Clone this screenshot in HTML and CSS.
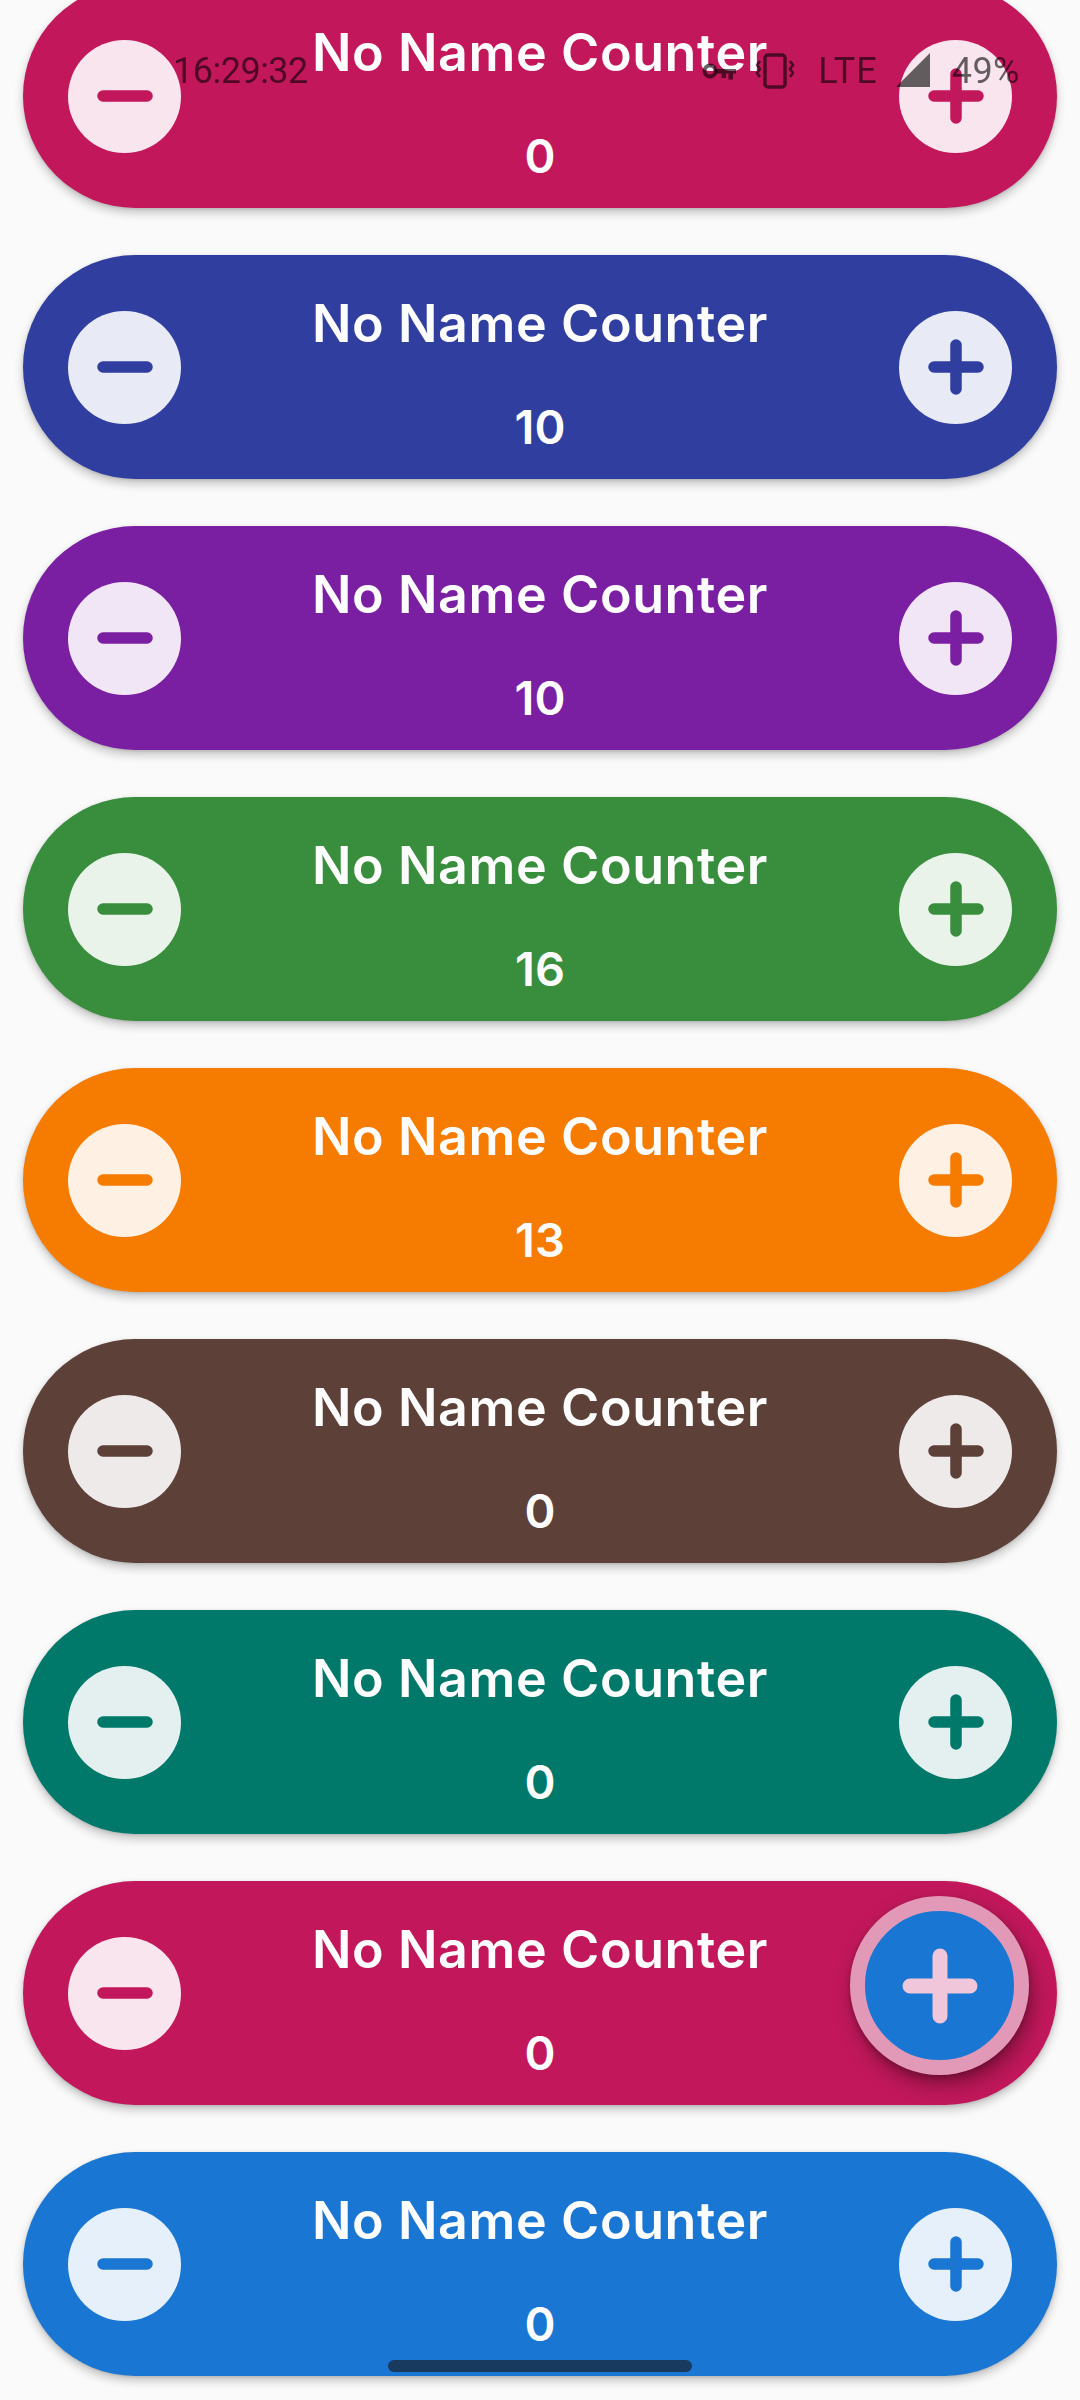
FILE: index.html
```html
<!DOCTYPE html>
<html lang="en">
<head>
<meta charset="utf-8">
<title>Counters</title>
<link rel="stylesheet" href="styles.css">
</head>
<body>
<div class="status-bar">
  <span class="time">16:29:32</span>
  <div class="status-right">
    <svg class="ic-key" width="36" height="22" viewBox="0 0 36 22"><circle cx="8" cy="9" r="5.5" fill="none" stroke="currentColor" stroke-width="4"/><path d="M13 7h21v4.5h-3v6h-4.5v-6h-2.5v4.5h-4.5v-4.5H13z" fill="currentColor"/></svg>
    <svg class="ic-vib" width="42" height="36" viewBox="0 0 42 36"><rect x="11" y="2" width="20" height="32" rx="3" fill="none" stroke="currentColor" stroke-width="3.5"/><path d="M6 8l-3 4 3 4-3 4 3 4M36 8l3 4-3 4 3 4-3 4" fill="none" stroke="currentColor" stroke-width="2.6" stroke-linejoin="round"/></svg>
    <span class="lte">LTE</span>
    <svg class="ic-sig" width="34" height="34" viewBox="0 0 34 34"><path d="M34 0V34H0z" fill="currentColor"/></svg>
    <span class="batt">49%</span>
  </div>
</div>

<main class="list">
  <section class="card pink">
    <button class="btn"><svg viewBox="0 0 56 56"><path d="M6 28H50"/></svg></button>
    <div class="info"><div class="title">No Name Counter</div><div class="count">0</div></div>
    <button class="btn"><svg viewBox="0 0 56 56"><path d="M6 28H50M28 6V50"/></svg></button>
  </section>
  <section class="card indigo">
    <button class="btn"><svg viewBox="0 0 56 56"><path d="M6 28H50"/></svg></button>
    <div class="info"><div class="title">No Name Counter</div><div class="count">10</div></div>
    <button class="btn"><svg viewBox="0 0 56 56"><path d="M6 28H50M28 6V50"/></svg></button>
  </section>
  <section class="card purple">
    <button class="btn"><svg viewBox="0 0 56 56"><path d="M6 28H50"/></svg></button>
    <div class="info"><div class="title">No Name Counter</div><div class="count">10</div></div>
    <button class="btn"><svg viewBox="0 0 56 56"><path d="M6 28H50M28 6V50"/></svg></button>
  </section>
  <section class="card green">
    <button class="btn"><svg viewBox="0 0 56 56"><path d="M6 28H50"/></svg></button>
    <div class="info"><div class="title">No Name Counter</div><div class="count">16</div></div>
    <button class="btn"><svg viewBox="0 0 56 56"><path d="M6 28H50M28 6V50"/></svg></button>
  </section>
  <section class="card orange">
    <button class="btn"><svg viewBox="0 0 56 56"><path d="M6 28H50"/></svg></button>
    <div class="info"><div class="title">No Name Counter</div><div class="count">13</div></div>
    <button class="btn"><svg viewBox="0 0 56 56"><path d="M6 28H50M28 6V50"/></svg></button>
  </section>
  <section class="card brown">
    <button class="btn"><svg viewBox="0 0 56 56"><path d="M6 28H50"/></svg></button>
    <div class="info"><div class="title">No Name Counter</div><div class="count">0</div></div>
    <button class="btn"><svg viewBox="0 0 56 56"><path d="M6 28H50M28 6V50"/></svg></button>
  </section>
  <section class="card teal">
    <button class="btn"><svg viewBox="0 0 56 56"><path d="M6 28H50"/></svg></button>
    <div class="info"><div class="title">No Name Counter</div><div class="count">0</div></div>
    <button class="btn"><svg viewBox="0 0 56 56"><path d="M6 28H50M28 6V50"/></svg></button>
  </section>
  <section class="card pink">
    <button class="btn"><svg viewBox="0 0 56 56"><path d="M6 28H50"/></svg></button>
    <div class="info"><div class="title">No Name Counter</div><div class="count">0</div></div>
    <button class="btn"><svg viewBox="0 0 56 56"><path d="M6 28H50M28 6V50"/></svg></button>
  </section>
  <section class="card blue">
    <button class="btn"><svg viewBox="0 0 56 56"><path d="M6 28H50"/></svg></button>
    <div class="info"><div class="title">No Name Counter</div><div class="count">0</div></div>
    <button class="btn"><svg viewBox="0 0 56 56"><path d="M6 28H50M28 6V50"/></svg></button>
  </section>
</main>

<button class="fab"><svg viewBox="0 0 76 76"><path d="M8 38H68M38 8V68"/></svg></button>
<div class="nav-handle"></div>
</body>
</html>
```

FILE: styles.css
```css
* { box-sizing: border-box; }
html, body { margin: 0; padding: 0; }
body {
  width: 1080px;
  height: 2400px;
  overflow: hidden;
  background: #fafafa;
  font-family: Inter, "Noto Sans", sans-serif;
}

.list {
  display: flex;
  flex-direction: column;
  gap: 47px;
  margin-top: -16px;
  padding: 0 23px;
}

.card {
  height: 224px;
  border-radius: 112px;
  display: flex;
  align-items: center;
  padding: 0 45px;
  box-shadow: 0 5px 10px rgba(0,0,0,0.22), 0 1px 3px rgba(0,0,0,0.12);
  color: var(--c);
}
.pink { --c: #c2185b; background: #c2185b; }
.indigo { --c: #303f9f; background: #303f9f; }
.purple { --c: #7b1fa2; background: #7b1fa2; }
.green { --c: #388e3c; background: #388e3c; }
.orange { --c: #f57c00; background: #f57c00; }
.brown { --c: #5d4037; background: #5d4037; }
.teal { --c: #00796b; background: #00796b; }
.blue { --c: #1976d2; background: #1976d2; }

.btn {
  width: 113px;
  height: 113px;
  flex: none;
  border: none;
  padding: 0;
  border-radius: 50%;
  background: rgba(255,255,255,0.89);
  display: flex;
  align-items: center;
  justify-content: center;
}
.btn svg {
  width: 56px;
  height: 56px;
  fill: none;
  stroke: var(--c);
  stroke-width: 11.5;
  stroke-linecap: round;
}

.info {
  flex: 1;
  align-self: stretch;
  display: flex;
  flex-direction: column;
  align-items: center;
  padding-top: 38px;
  color: #fcfcfc;
  font-weight: 600;
}
.title {
  font-size: 52px;
  line-height: 62px;
  letter-spacing: 0.6px;
  white-space: nowrap;
}
.count {
  margin-top: 43px;
  font-size: 47px;
  line-height: 57px;
}

.status-bar {
  position: fixed;
  top: 0;
  left: 0;
  width: 1080px;
  height: 142px;
  display: flex;
  align-items: center;
  justify-content: space-between;
  padding: 0 60px 0 173px;
  color: rgba(0,0,0,0.6);
  font-family: Roboto, "Noto Sans", sans-serif;
  font-size: 36px;
}
.time { letter-spacing: -0.5px; }
.status-right {
  display: flex;
  align-items: center;
}
.ic-key { margin-right: 16px; margin-top: 4px; }
.ic-vib { margin-right: 22px; }
.lte { margin-right: 18px; letter-spacing: 1px; }
.ic-sig { margin-right: 22px; margin-top: -2px; }
.batt { letter-spacing: 0.5px; }

.fab {
  position: fixed;
  left: 850px;
  top: 1896px;
  width: 179px;
  height: 179px;
  border-radius: 50%;
  border: 15px solid #e199b7;
  background: #1976d2;
  padding: 0;
  display: flex;
  align-items: center;
  justify-content: center;
  box-shadow: 4px 10px 20px rgba(0,0,0,0.35), 0 3px 6px rgba(0,0,0,0.2);
}
.fab svg {
  width: 76px;
  height: 76px;
  fill: none;
  stroke: #f0c6da;
  stroke-width: 15;
  stroke-linecap: round;
}

.nav-handle {
  position: fixed;
  left: 388px;
  top: 2360px;
  width: 304px;
  height: 12px;
  border-radius: 6px;
  background: #183a5f;
}
```
